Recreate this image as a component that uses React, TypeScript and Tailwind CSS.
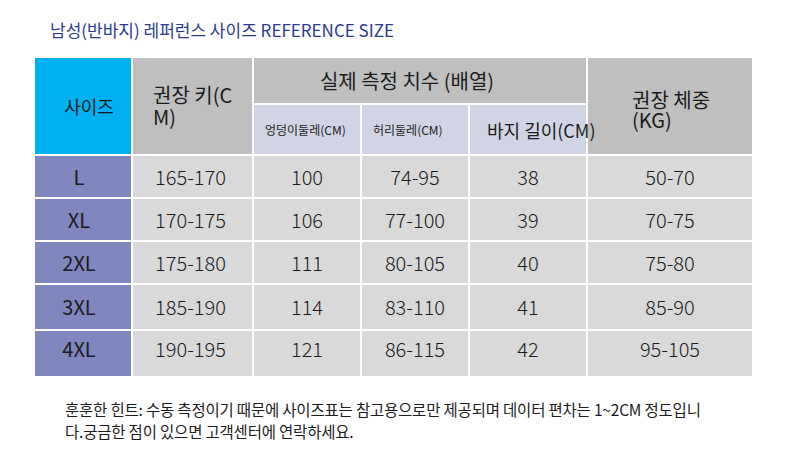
import React from "react";

const font = { fontFamily: '"Noto Sans CJK KR", "Noto Sans", sans-serif' };

const rows = [
  { s: "L", h: "165-170", a: "100", b: "74-95", c: "38", w: "50-70", cls: "h-[41px]" },
  { s: "XL", h: "170-175", a: "106", b: "77-100", c: "39", w: "70-75", cls: "h-[41px]" },
  { s: "2XL", h: "175-180", a: "111", b: "80-105", c: "40", w: "75-80", cls: "h-[41px]" },
  { s: "3XL", h: "185-190", a: "114", b: "83-110", c: "41", w: "85-90", cls: "h-[44px]" },
  { s: "4XL", h: "190-195", a: "121", b: "86-115", c: "42", w: "95-105", cls: "h-[45px] pb-[10px]" },
];

export default function App() {
  return (
    <div className="w-[790px] h-[468px] bg-white text-[#1c1c1c] overflow-hidden" style={font}>
      <div className="pl-[50px] pt-[18px] h-[58px] text-[17px] leading-[24px] text-[#2b3b8e]">
        남성(반바지) 레퍼런스 사이즈 REFERENCE SIZE
      </div>
      <div className="ml-[35px] w-[717px] grid grid-cols-[96px_119px_106px_106px_116px_164px] gap-[2px] bg-white">
        <div className="row-span-2 bg-[#00b0f0] flex items-center justify-center pl-[12px] text-[18px]">
          사이즈
        </div>
        <div className="row-span-2 bg-[#bfbfbf] flex flex-col justify-center pl-[20px] text-[20px]">
          <div className="h-[22px] leading-[22px]">권장 키(C</div>
          <div className="h-[22px] leading-[22px]">M)</div>
        </div>
        <div className="col-span-3 h-[45px] bg-[#bfbfbf] flex items-center justify-center pr-[26px] text-[20px]">
          실제 측정 치수 (배열)
        </div>
        <div className="row-span-2 bg-[#bfbfbf] flex flex-col justify-center pl-[44px] pt-[8px] text-[20px]">
          <div className="h-[20px] leading-[20px]">권장 체중</div>
          <div className="h-[20px] leading-[20px]">(KG)</div>
        </div>
        <div className="h-[49px] bg-[#d1d4e4] flex items-center pl-[11px] text-[12px]">엉덩이둘레(CM)</div>
        <div className="h-[49px] bg-[#d1d4e4] flex items-center pl-[11px] text-[12px]">허리둘레(CM)</div>
        <div className="h-[49px] bg-[#d1d4e4] flex items-center pl-[17px] pt-[2px] text-[18px]">
          <span className="relative z-10 whitespace-nowrap">바지 길이(CM)</span>
        </div>
        {rows.map((r) => (
          <React.Fragment key={r.s}>
            <div className={`${r.cls} bg-[#8087bf] flex items-center justify-center pr-[8px] text-[20px]`}>{r.s}</div>
            <div className={`${r.cls} bg-[#d9d9d9] flex items-center justify-center pr-[4px] text-[20px] font-light`}>{r.h}</div>
            <div className={`${r.cls} bg-[#d9d9d9] flex items-center justify-center text-[20px] font-light`}>{r.a}</div>
            <div className={`${r.cls} bg-[#d9d9d9] flex items-center justify-center text-[20px] font-light`}>{r.b}</div>
            <div className={`${r.cls} bg-[#d9d9d9] flex items-center justify-center text-[20px] font-light`}>{r.c}</div>
            <div className={`${r.cls} bg-[#d9d9d9] flex items-center justify-center text-[20px] font-light`}>{r.w}</div>
          </React.Fragment>
        ))}
      </div>
      <div className="pl-[65px] pt-[22px] text-[15.5px] leading-[22px] tracking-[-0.2px]">
        <div className="h-[22px] whitespace-nowrap">
          훈훈한 힌트: 수동 측정이기 때문에 사이즈표는 참고용으로만 제공되며 데이터 편차는 1~2CM 정도입니
        </div>
        <div className="h-[22px] whitespace-nowrap">다.궁금한 점이 있으면 고객센터에 연락하세요.</div>
      </div>
    </div>
  );
}
